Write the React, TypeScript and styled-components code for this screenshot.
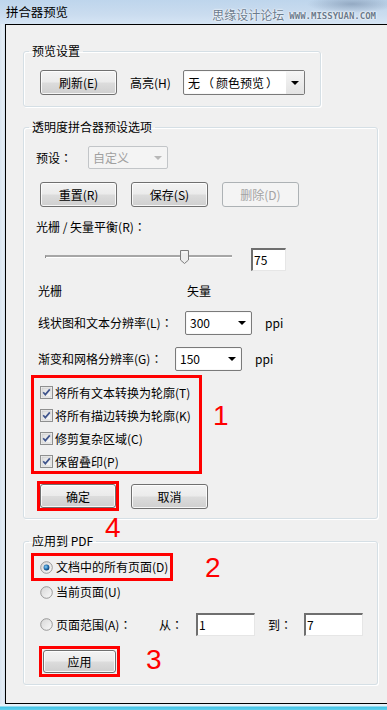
import styled, { createGlobalStyle } from 'styled-components'

const GlobalStyle = createGlobalStyle`
  html, body {
    margin: 0;
    padding: 0;
  }
  body {
    background: #d4e3f2;
    font-family: "Noto Sans CJK SC", "Noto Sans", sans-serif;
    font-size: 12px;
    color: #000;
    overflow: hidden;
  }
`

const Frame = styled.div`
  width: 387px;
  height: 710px;
  overflow: hidden;
  display: flex;
  flex-direction: column;
  background: linear-gradient(90deg, #d9e5f0 0, #e6eef6 3px, #cfdeec 5px);
`

const TitleBar = styled.div`
  height: 24px;
  flex: none;
  display: flex;
  align-items: center;
  padding: 0 11px 0 6px;
  background:
    radial-gradient(ellipse 45px 9px at 352px 4px, rgba(110, 132, 160, 0.55), transparent),
    linear-gradient(180deg, #bed5ec 0%, #cadcef 60%, #d6e5f4 100%);
`

const Title = styled.span`
  font-size: 12.4px;
  line-height: 16px;
  margin-top: -1px;
`

const Watermark = styled.div`
  margin-left: auto;
  display: flex;
  align-items: center;
  gap: 5px;
  color: #6b7b8d;
  text-shadow: 0 0 2px #fff, 0 0 2px #fff;
`

const WatermarkCn = styled.span`
  font-size: 12px;
  line-height: 16px;
  margin-top: 5px;
`

const WatermarkUrl = styled.span`
  font-family: "DejaVu Sans Mono", monospace;
  font-size: 9px;
  font-weight: bold;
  margin-top: 8px;
`

const Body = styled.div`
  flex: none;
  margin-left: 5px;
  width: 430px;
  height: 680px;
  box-sizing: border-box;
  background: #f0f0f0;
  border: 1px solid #000;
  border-right: none;
  padding: 18px 0 0 17px;
  display: flex;
  flex-direction: column;
`

const BottomEdge = styled.div`
  flex: 1;
  background: linear-gradient(180deg, #e4f2fa 0, #e4f2fa 2px, #44c3e4 3px, #5fd0ee 100%);
`

const Group = styled.fieldset<{ $w: number; $mt?: number }>`
  margin: ${p => p.$mt ?? 0}px 0 0;
  padding: 0;
  width: ${p => p.$w}px;
  min-width: 0;
  box-sizing: border-box;
  border: 1px solid #d5dfe5;
  border-radius: 3px;
  box-shadow: inset 1px 1px 0 #fff, 1px 1px 0 #fff;
`

const Legend = styled.legend`
  margin-left: 5px;
  padding: 0 3px;
  line-height: 16px;
  font-size: 12px;
`

const GroupInner = styled.div<{ $pt: number; $pb: number }>`
  display: flex;
  flex-direction: column;
  padding: ${p => p.$pt}px 0 ${p => p.$pb}px 13px;
`

const Row = styled.div<{ $mt?: number; $pl?: number; $top?: boolean }>`
  display: flex;
  align-items: ${p => (p.$top ? 'flex-start' : 'center')};
  margin-top: ${p => p.$mt ?? 0}px;
  padding-left: ${p => p.$pl ?? 0}px;
`

const Label = styled.span<{ $w?: number; $ml?: number; $muted?: boolean }>`
  display: inline-block;
  flex: none;
  width: ${p => (p.$w ? `${p.$w}px` : 'auto')};
  margin-left: ${p => p.$ml ?? 0}px;
  line-height: 16px;
  white-space: nowrap;
  color: ${p => (p.$muted ? '#a0a0a0' : '#000')};
`

// full-width colon drawn centred, as the Windows UI font does
const Colon = styled.span`
  font-family: "Noto Sans CJK TC", "Noto Sans CJK SC", sans-serif;
`

const Button = styled.button<{ $w?: number; $h?: number; $ml?: number }>`
  flex: none;
  width: ${p => p.$w ?? 77}px;
  height: ${p => p.$h ?? 25}px;
  margin: 0 0 0 ${p => p.$ml ?? 0}px;
  padding: 0;
  font: inherit;
  color: #000;
  border: 1px solid #707070;
  border-radius: 3px;
  background: linear-gradient(180deg, #f3f3f3 0%, #ebebeb 48%, #dcdcdc 52%, #cfcfcf 100%);
  box-shadow: inset 0 0 0 1px rgba(255, 255, 255, 0.8);

  &:disabled {
    color: #a3a3a3;
    border-color: #adb2b5;
    background: #f4f4f4;
    box-shadow: none;
  }
`

const Combo = styled.div<{ $w: number; $h: number; $disabled?: boolean }>`
  flex: none;
  width: ${p => p.$w}px;
  height: ${p => p.$h}px;
  box-sizing: border-box;
  display: flex;
  align-items: center;
  border: 1px solid ${p => (p.$disabled ? '#c2c5c8' : '#7a7a7a')};
  border-radius: 2px;
  background: ${p => (p.$disabled ? '#f4f4f4' : '#fff')};
  color: ${p => (p.$disabled ? '#a0a0a0' : '#000')};
  box-shadow: inset 0 0 0 1px ${p => (p.$disabled ? '#f4f4f4' : '#f8f8f8')};
`

const ComboText = styled.span`
  flex: 1;
  padding-left: 4px;
  line-height: 16px;
  white-space: nowrap;
  overflow: hidden;
`

const Paren = styled.span`
  font-family: "Noto Sans CJK TC", "Noto Sans CJK SC", sans-serif;
  padding: 0 2px;
`

const ComboArrow = styled.span<{ $shaded?: boolean; $disabled?: boolean }>`
  flex: none;
  width: 18px;
  align-self: stretch;
  display: flex;
  align-items: center;
  justify-content: center;
  background: ${p => (p.$shaded ? 'linear-gradient(180deg, #f5f5f5, #e3e3e3)' : 'transparent')};

  &::after {
    content: '';
    border-left: 4px solid transparent;
    border-right: 4px solid transparent;
    border-top: 4px solid ${p => (p.$disabled ? '#b8b8b8' : '#000')};
  }
`

const TextBox = styled.div<{ $w: number; $h: number; $ml?: number }>`
  flex: none;
  width: ${p => p.$w}px;
  height: ${p => p.$h}px;
  margin-left: ${p => p.$ml ?? 0}px;
  box-sizing: border-box;
  display: flex;
  align-items: center;
  padding-left: 1px;
  background: #fff;
  border-style: solid;
  border-width: 2px 1px 1px 2px;
  border-color: #6f6f6f #e6e6e6 #e6e6e6 #6f6f6f;
  line-height: 16px;
`

const Slider = styled.div`
  position: relative;
  flex: none;
  width: 187px;
  height: 3px;
  margin: 7px 0 0 8px;
  border-top: 2px solid #a6a6a6;
  border-left: 1px solid #8a8a8a;
  background: #fff;
  box-sizing: border-box;
`

const SliderThumb = styled.svg`
  position: absolute;
  left: 134px;
  top: -7px;
`

const RedBox = styled.div<{ $w: number; $h: number; $ml?: number; $pad?: string }>`
  flex: none;
  width: ${p => p.$w}px;
  height: ${p => p.$h}px;
  margin-left: ${p => p.$ml ?? 0}px;
  box-sizing: border-box;
  border: 3px solid #ff0000;
  padding: ${p => p.$pad ?? '0'};
  position: relative;
`

const CheckList = styled(RedBox)`
  display: flex;
  flex-direction: column;
`

const CheckRow = styled.div`
  display: flex;
  align-items: center;
  height: 23px;
  flex: none;
`

const Mark = styled.span<{ $ml?: number; $mt?: number }>`
  font-family: "Liberation Sans", Arial, sans-serif;
  font-size: 28px;
  line-height: 28px;
  color: #ff0000;
  margin-left: ${p => p.$ml ?? 0}px;
  margin-top: ${p => p.$mt ?? 0}px;
`

const FloatingMark = styled(Mark)`
  position: absolute;
  left: 65px;
  top: 30px;
`

const OptionRow = styled.div<{ $mt?: number; $pl?: number; $h?: number }>`
  display: flex;
  align-items: center;
  gap: 2px;
  height: ${p => (p.$h ? `${p.$h}px` : 'auto')};
  margin-top: ${p => p.$mt ?? 0}px;
  padding-left: ${p => p.$pl ?? 0}px;
`

const Check = () => (
  <svg width="13" height="13" viewBox="0 0 13 13">
    <defs>
      <linearGradient id="cbg" x1="0" y1="0" x2="1" y2="1">
        <stop offset="0" stopColor="#dcdcdc" />
        <stop offset="1" stopColor="#fbfbfb" />
      </linearGradient>
    </defs>
    <rect x="0.5" y="0.5" width="12" height="12" fill="#f4f4f4" stroke="#8e8f8f" />
    <rect x="2" y="2" width="9" height="9" fill="url(#cbg)" stroke="#c4c4c4" strokeWidth="0.6" />
    <path d="M3.2 6.3 L5.3 8.6 L9.8 3.4" fill="none" stroke="#40558c" strokeWidth="1.7" />
  </svg>
)

const Radio = ({ on }: { on?: boolean }) => (
  <svg width="13" height="13" viewBox="0 0 13 13">
    <defs>
      <linearGradient id="rbg" x1="0" y1="0" x2="1" y2="1">
        <stop offset="0" stopColor="#d6d6d6" />
        <stop offset="1" stopColor="#fafafa" />
      </linearGradient>
      <radialGradient id="rdot" cx="0.4" cy="0.4" r="0.6">
        <stop offset="0" stopColor="#8fd1f5" />
        <stop offset="0.6" stopColor="#2a79b8" />
        <stop offset="1" stopColor="#123f6e" />
      </radialGradient>
    </defs>
    <circle cx="6.5" cy="6.5" r="5.8" fill="url(#rbg)" stroke="#8e8f8f" strokeWidth="0.9" />
    {on && <circle cx="6.5" cy="6.5" r="2.9" fill="url(#rdot)" />}
  </svg>
)

export default function App() {
  return (
    <>
      <GlobalStyle />
      <Frame>
        <TitleBar>
          <Title>拼合器预览</Title>
          <Watermark>
            <WatermarkCn>思缘设计论坛</WatermarkCn>
            <WatermarkUrl>WWW.MISSYUAN.COM</WatermarkUrl>
          </Watermark>
        </TitleBar>

        <Body>
          <Group $w={298}>
            <Legend>预览设置</Legend>
            <GroupInner $pt={11} $pb={11}>
              <Row $pl={3}>
                <Button>刷新(E)</Button>
                <Label $ml={13} $w={53}>高亮(H)</Label>
                <Combo $w={122} $h={25}>
                  <ComboText>无<Paren>（</Paren>颜色预览<Paren>）</Paren></ComboText>
                  <ComboArrow $shaded />
                </Combo>
              </Row>
            </GroupInner>
          </Group>

          <Group $w={355} $mt={12}>
            <Legend>透明度拼合器预设选项</Legend>
            <GroupInner $pt={11} $pb={7}>
              <Row>
                <Label $ml={-1} $w={52}>预设<Colon>：</Colon></Label>
                <Combo $w={80} $h={23} $disabled>
                  <ComboText>自定义</ComboText>
                  <ComboArrow $disabled />
                </Combo>
              </Row>

              <Row $mt={13} $pl={3}>
                <Button>重置(R)</Button>
                <Button $ml={14}>保存(S)</Button>
                <Button $ml={14} disabled>删除(D)</Button>
              </Row>

              <Row $mt={12}>
                <Label $ml={-1}>光栅 / 矢量平衡(R)<Colon>：</Colon></Label>
              </Row>

              <Row $mt={13} $top>
                <Slider>
                  <SliderThumb width="9" height="14" viewBox="0 0 9 14">
                    <path d="M0.5 0.5 H8.5 V10 L4.5 13.5 L0.5 10 Z" fill="#ececec" stroke="#7c7c7c" />
                    <path d="M2 2 H7" stroke="#fff" />
                  </SliderThumb>
                </Slider>
                <TextBox $w={35} $h={23} $ml={19}>75</TextBox>
              </Row>

              <Row $mt={12}>
                <Label $ml={1} $w={149}>光栅</Label>
                <Label>矢量</Label>
              </Row>

              <Row $mt={12}>
                <Label $ml={1} $w={147}>线状图和文本分辨率(L)<Colon>：</Colon></Label>
                <Combo $w={67} $h={24}>
                  <ComboText>300</ComboText>
                  <ComboArrow />
                </Combo>
                <Label $ml={13}>ppi</Label>
              </Row>

              <Row $mt={12}>
                <Label $ml={1} $w={137}>渐变和网格分辨率(G)<Colon>：</Colon></Label>
                <Combo $w={67} $h={24}>
                  <ComboText>150</ComboText>
                  <ComboArrow />
                </Combo>
                <Label $ml={13}>ppi</Label>
              </Row>

              <Row $mt={4} $top>
                <CheckList $w={171} $h={99} $ml={-6} $pad="3px 0 0 6px">
                  <CheckRow>
                    <Check />
                    <Label $ml={2}>将所有文本转换为轮廓(T)</Label>
                  </CheckRow>
                  <CheckRow>
                    <Check />
                    <Label $ml={2}>将所有描边转换为轮廓(K)</Label>
                  </CheckRow>
                  <CheckRow>
                    <Check />
                    <Label $ml={2}>修剪复杂区域(C)</Label>
                  </CheckRow>
                  <CheckRow>
                    <Check />
                    <Label $ml={2}>保留叠印(P)</Label>
                  </CheckRow>
                </CheckList>
                <Mark $ml={11} $mt={27}>1</Mark>
              </Row>

              <Row $mt={7}>
                <RedBox $w={82} $h={30}>
                  <Button $w={76} $h={24}>确定</Button>
                  <FloatingMark>4</FloatingMark>
                </RedBox>
                <Button $ml={12}>取消</Button>
              </Row>
            </GroupInner>
          </Group>

          <Group $w={355} $mt={14}>
            <Legend>应用到 PDF</Legend>
            <GroupInner $pt={4} $pb={7}>
              <Row $top>
                <RedBox $w={142} $h={28} $ml={-6}>
                  <OptionRow $pl={6} $h={22}>
                    <Radio on />
                    <Label $ml={1}>文档中的所有页面(D)</Label>
                  </OptionRow>
                </RedBox>
                <Mark $ml={32} $mt={1}>2</Mark>
              </Row>

              <OptionRow $mt={2} $pl={3} $h={16}>
                <Radio />
                <Label $ml={1}>当前页面(U)</Label>
              </OptionRow>

              <OptionRow $mt={13} $pl={3}>
                <Radio />
                <Label $ml={1} $w={101}>页面范围(A)<Colon>：</Colon></Label>
                <Label $w={35}>从<Colon>：</Colon></Label>
                <TextBox $w={59} $h={23}>1</TextBox>
                <Label $ml={11} $w={34}>到<Colon>：</Colon></Label>
                <TextBox $w={59} $h={23}>7</TextBox>
              </OptionRow>

              <Row $mt={10} $pl={2} $top>
                <RedBox $w={81} $h={31} $pad="1px">
                  <Button $w={73} $h={23}>应用</Button>
                </RedBox>
                <Mark $ml={26}>3</Mark>
              </Row>
            </GroupInner>
          </Group>
        </Body>
        <BottomEdge />
      </Frame>
    </>
  )
}
